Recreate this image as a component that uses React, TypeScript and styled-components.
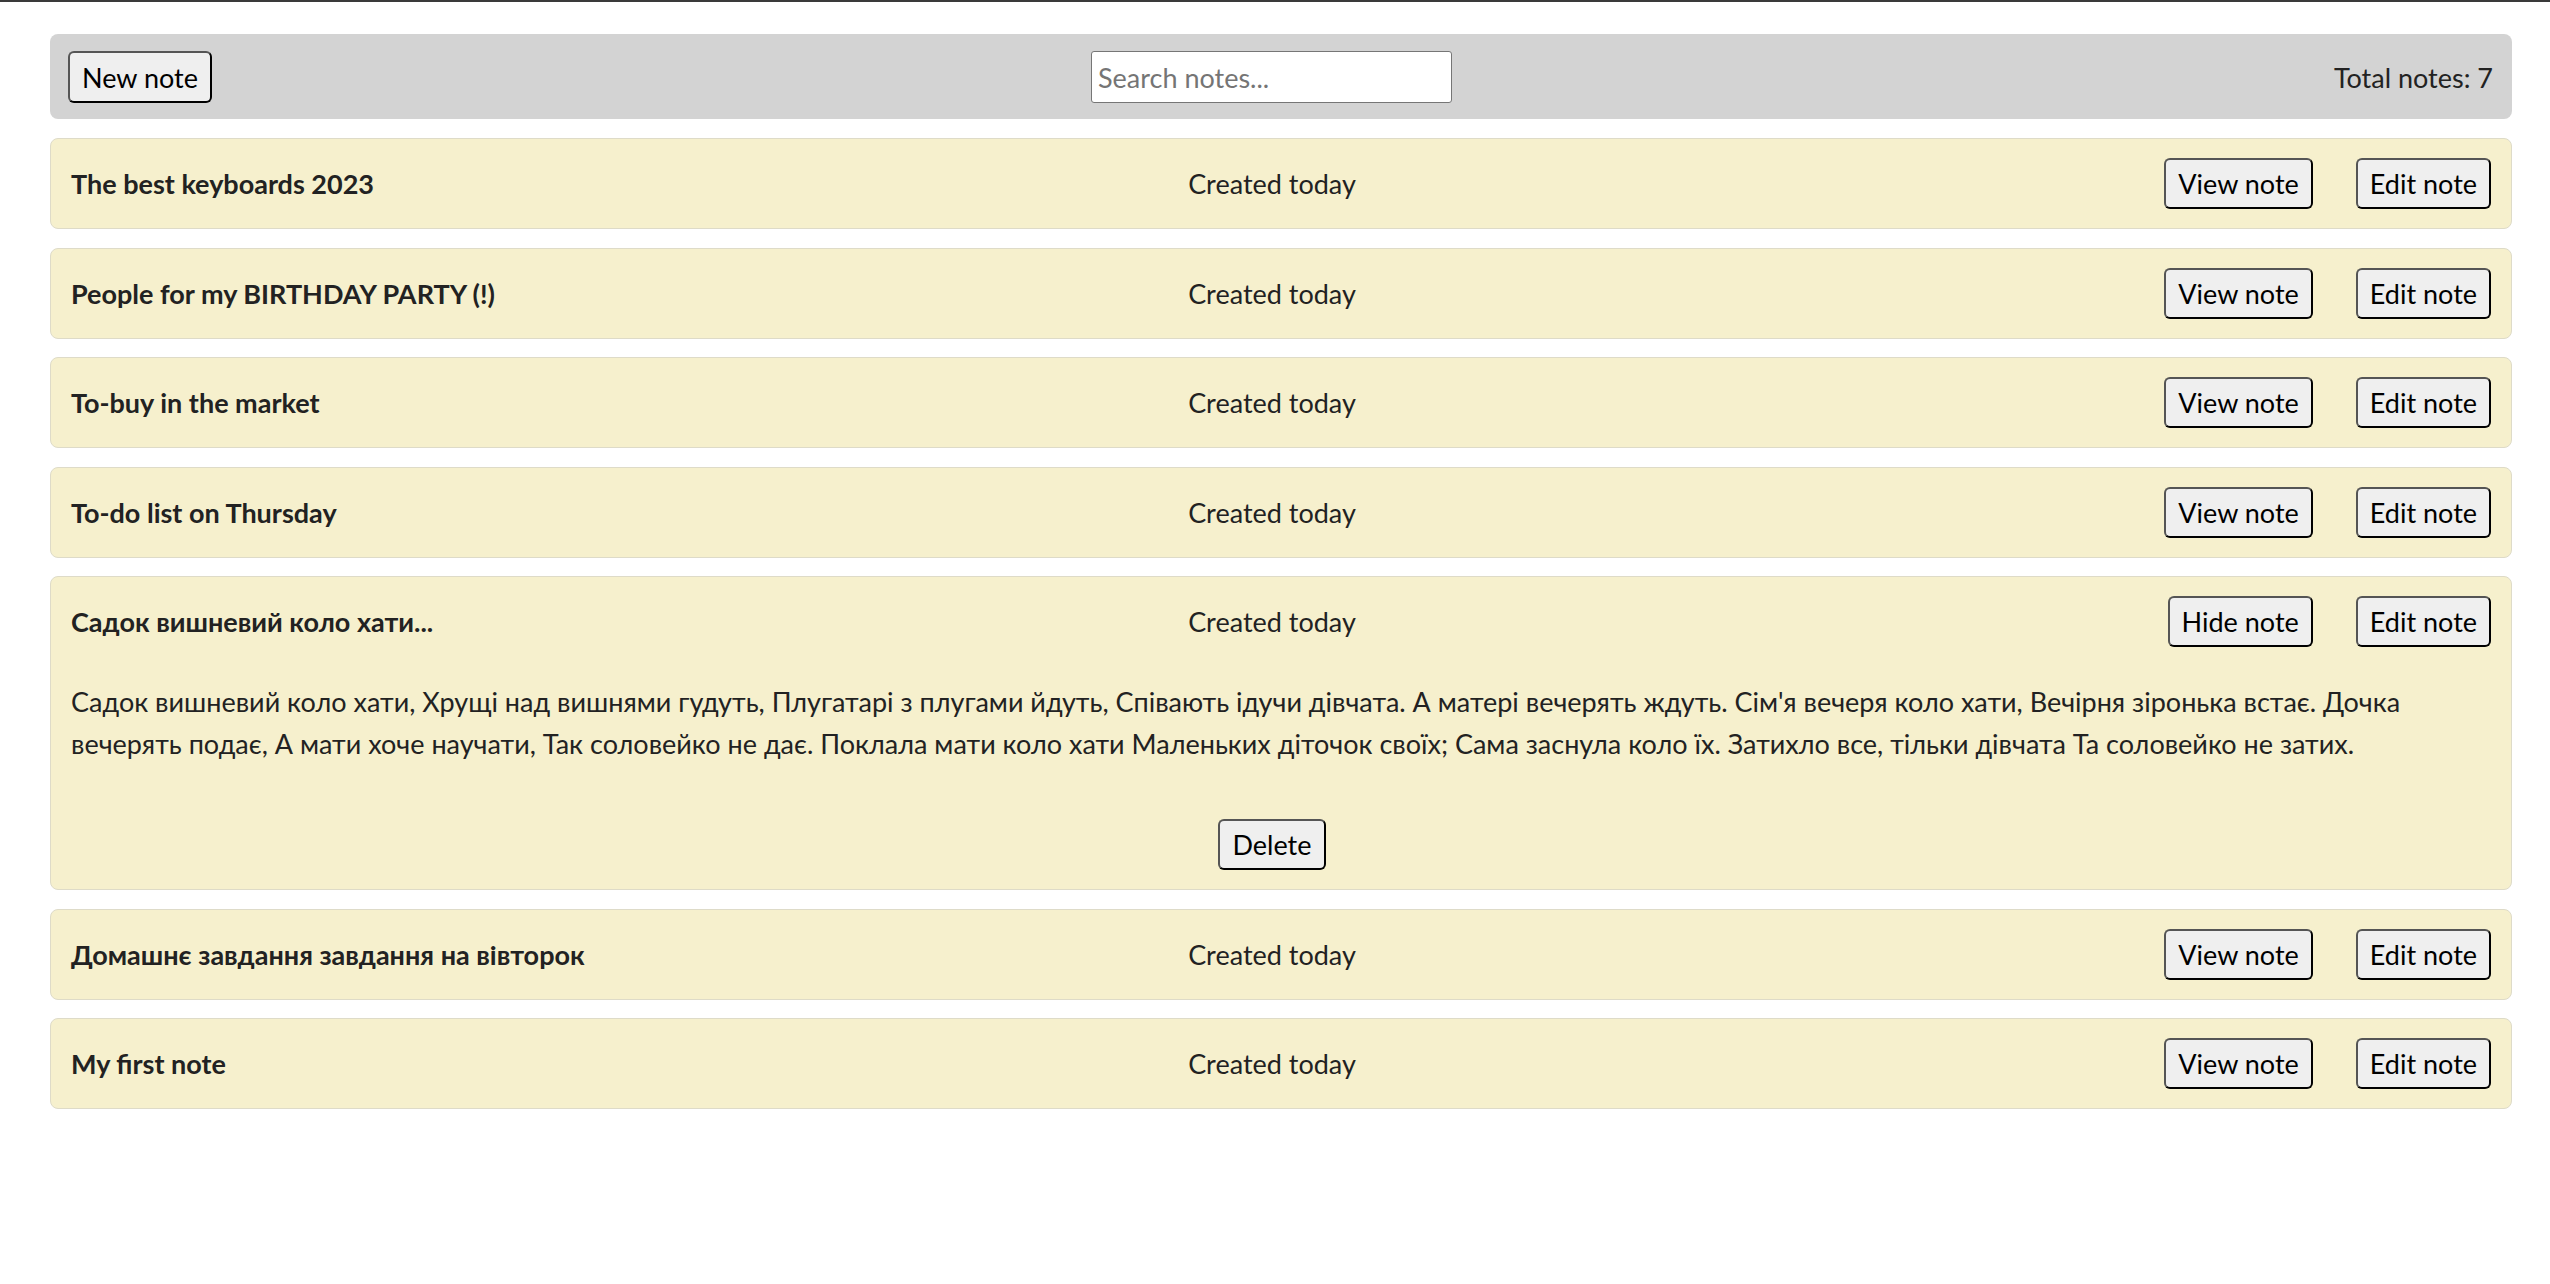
import React, { useState } from 'react'
import styled, { createGlobalStyle } from 'styled-components'

const GlobalStyle = createGlobalStyle`
  body {
    margin: 0;
    background: #fff;
    font-family: Lato, "Noto Sans", sans-serif;
    font-size: 27px;
    color: #222;
  }
`

const Page = styled.main`
  min-height: 1282px;
  border-top: 2px solid #3a3a3a;
  padding: 32px 38px 0 50px;
  display: flex;
  flex-direction: column;
  gap: 18.5px;
`

const Toolbar = styled.header`
  display: grid;
  grid-template-columns: 1fr auto 1fr;
  align-items: center;
  background: #d3d3d3;
  border-radius: 8px;
  padding: 17px 19px 16px 18px;
  margin-bottom: 0.5px;
`

const Button = styled.button`
  font: inherit;
  color: #000;
  background: #efefef;
  border: 2px solid;
  border-color: #555 #000 #000 #555;
  border-radius: 6px;
  padding: 0 12px;
  height: 51px;
  line-height: 1;
  cursor: pointer;
  white-space: nowrap;
`

const NewButton = styled(Button)`
  justify-self: start;
  height: 52px;
`

const Search = styled.input`
  font: inherit;
  width: 361px;
  height: 52px;
  box-sizing: border-box;
  border: 1px solid #767676;
  border-radius: 3px;
  padding: 0 6px;
  margin-right: 18px;
  background: #fff;
  color: #222;

  &::placeholder {
    color: #757575;
  }
`

const Total = styled.span`
  justify-self: end;
`

const Card = styled.section`
  background: #f6f0cd;
  border: 1px solid #dedbc8;
  border-radius: 8px;
  padding: 19px 20px;
`

const CardHead = styled.div`
  display: grid;
  grid-template-columns: 1fr auto 1fr;
  align-items: center;
`

const Title = styled.h2`
  margin: 0;
  font-size: inherit;
  font-weight: 700;
  justify-self: start;
`

const Created = styled.span`
  margin-right: 18px;
`

const Actions = styled.div`
  justify-self: end;
  display: flex;
  gap: 43px;
`

const Text = styled.p`
  margin: 34px 0 0;
  line-height: 42px;
`

const DeleteRow = styled.div`
  display: flex;
  justify-content: center;
  margin-top: 54px;
`

const DeleteButton = styled(Button)`
  margin-right: 18px;
`

type Note = { id: number; title: string; text: string }

const poem =
  "Садок вишневий коло хати, Хрущі над вишнями гудуть, Плугатарі з плугами йдуть, Співають ідучи дівчата. А матері вечерять ждуть. Сім'я вечеря коло хати, Вечірня зіронька встає. Дочка вечерять подає, А мати хоче научати, Так соловейко не дає. Поклала мати коло хати Маленьких діточок своїх; Сама заснула коло їх. Затихло все, тільки дівчата Та соловейко не затих."

const notes: Note[] = [
  { id: 1, title: 'The best keyboards 2023', text: '' },
  { id: 2, title: 'People for my BIRTHDAY PARTY (!)', text: '' },
  { id: 3, title: 'To-buy in the market', text: '' },
  { id: 4, title: 'To-do list on Thursday', text: '' },
  { id: 5, title: 'Садок вишневий коло хати...', text: poem },
  { id: 6, title: 'Домашнє завдання завдання на вівторок', text: '' },
  { id: 7, title: 'My first note', text: '' },
]

const NoteCard = ({ note, open, onToggle }: { note: Note; open: boolean; onToggle: () => void }) => (
  <Card>
    <CardHead>
      <Title>{note.title}</Title>
      <Created>Created today</Created>
      <Actions>
        <Button onClick={onToggle}>{open ? 'Hide note' : 'View note'}</Button>
        <Button>Edit note</Button>
      </Actions>
    </CardHead>
    {open && (
      <>
        <Text>{note.text}</Text>
        <DeleteRow>
          <DeleteButton>Delete</DeleteButton>
        </DeleteRow>
      </>
    )}
  </Card>
)

export default function App() {
  const [openId, setOpenId] = useState<number | null>(5)

  return (
    <>
      <GlobalStyle />
      <Page>
        <Toolbar>
          <NewButton>New note</NewButton>
          <Search placeholder="Search notes..." />
          <Total>Total notes: {notes.length}</Total>
        </Toolbar>
        {notes.map(note => (
          <NoteCard
            key={note.id}
            note={note}
            open={openId === note.id}
            onToggle={() => setOpenId(openId === note.id ? null : note.id)}
          />
        ))}
      </Page>
    </>
  )
}
